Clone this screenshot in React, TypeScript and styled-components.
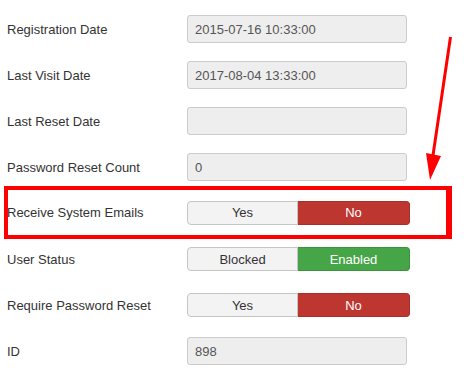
import React from "react";
import styled, { createGlobalStyle } from "styled-components";

const Global = createGlobalStyle`
  html, body { margin: 0; padding: 0; background: #fff; }
  body { font-family: "Liberation Sans", Arial, sans-serif; font-size: 13px; color: #333; }
`;

const Page = styled.div`
  position: relative;
  width: 472px;
  height: 392px;
  overflow: hidden;
  box-sizing: border-box;
  padding: 6px 0 0 7px;
`;

const Row = styled.div<{ $shift?: number }>`
  display: grid;
  grid-template-columns: ${(p) => 180 - (p.$shift ?? 0)}px auto;
  align-items: center;
  height: ${(p) => (p.$shift ? 45 : 46)}px;
`;

const Label = styled.div<{ $nudge?: number }>`
  font-size: 13px;
  color: #333;
  margin-left: ${(p) => p.$nudge ?? 0}px;
  white-space: nowrap;
`;

const Input = styled.div`
  box-sizing: border-box;
  width: 220px;
  height: 28px;
  background: #eeeeee;
  border: 1px solid #cccccc;
  border-radius: 3px;
  padding: 0 7px;
  display: flex;
  align-items: center;
  color: #555;
  font-size: 13px;
`;

const Toggle = styled.div`
  display: flex;
  width: 223px;
  height: 24px;
`;

const ToggleBtn = styled.div<{ $variant: "off" | "danger" | "success"; $first?: boolean }>`
  box-sizing: border-box;
  flex: 0 0 ${(p) => (p.$first ? 111 : 112)}px;
  display: flex;
  align-items: center;
  justify-content: center;
  font-size: 13px;
  border: 1px solid
    ${(p) => (p.$variant === "off" ? "#c5c5c5" : p.$variant === "danger" ? "#a9302a" : "#3b933b")};
  border-radius: ${(p) => (p.$first ? "4px 0 0 4px" : "0 4px 4px 0")};
  background: ${(p) =>
    p.$variant === "off" ? "#f3f3f3" : p.$variant === "danger" ? "#bd362f" : "#46a546"};
  color: ${(p) => (p.$variant === "off" ? "#333" : "#fff")};
  ${(p) => (p.$first ? "" : "border-left: none;")}
`;

const Highlight = styled.div`
  box-sizing: border-box;
  width: 448px;
  margin: -4px 0 -3px -3px;
  border-style: solid;
  border-color: #ff0000;
  border-width: 4px 6px 4px 4px;
`;

const Arrow = styled.svg`
  position: absolute;
  left: 0;
  top: 0;
  pointer-events: none;
`;

type Opt = { label: string; variant: "off" | "danger" | "success" };

const Switch = ({ a, b }: { a: Opt; b: Opt }) => (
  <Toggle>
    <ToggleBtn $first $variant={a.variant}>{a.label}</ToggleBtn>
    <ToggleBtn $variant={b.variant}>{b.label}</ToggleBtn>
  </Toggle>
);

export default function App() {
  return (
    <Page>
      <Global />
      <Row>
        <Label>Registration Date</Label>
        <Input>2015-07-16 10:33:00</Input>
      </Row>
      <Row>
        <Label>Last Visit Date</Label>
        <Input>2017-08-04 13:33:00</Input>
      </Row>
      <Row>
        <Label>Last Reset Date</Label>
        <Input />
      </Row>
      <Row>
        <Label>Password Reset Count</Label>
        <Input>0</Input>
      </Row>
      <Highlight>
        <Row $shift={1}>
          <Label $nudge={-1}>Receive System Emails</Label>
          <Switch a={{ label: "Yes", variant: "off" }} b={{ label: "No", variant: "danger" }} />
        </Row>
      </Highlight>
      <Row>
        <Label>User Status</Label>
        <Switch a={{ label: "Blocked", variant: "off" }} b={{ label: "Enabled", variant: "success" }} />
      </Row>
      <Row>
        <Label>Require Password Reset</Label>
        <Switch a={{ label: "Yes", variant: "off" }} b={{ label: "No", variant: "danger" }} />
      </Row>
      <Row>
        <Label>ID</Label>
        <Input>898</Input>
      </Row>
      <Arrow width="472" height="392" viewBox="0 0 472 392">
        <line x1="450.5" y1="37" x2="432" y2="162" stroke="#ff0000" strokeWidth="3" />
        <polygon points="426,153 441,156 430,180" fill="#ff0000" />
      </Arrow>
    </Page>
  );
}
